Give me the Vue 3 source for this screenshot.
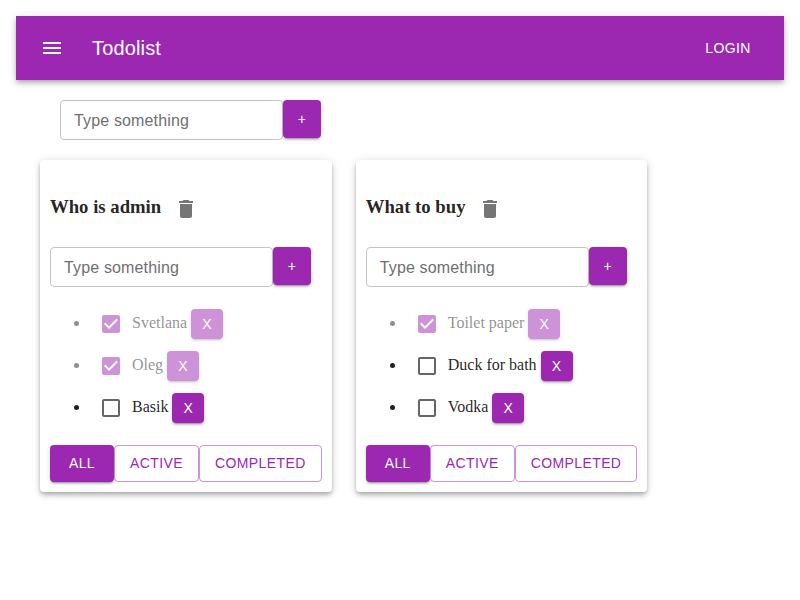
<script setup>
import { reactive } from 'vue'

const lists = reactive([
  {
    title: 'Who is admin',
    tasks: [
      { name: 'Svetlana', done: true },
      { name: 'Oleg', done: true },
      { name: 'Basik', done: false },
    ],
  },
  {
    title: 'What to buy',
    tasks: [
      { name: 'Toilet paper', done: true },
      { name: 'Duck for bath', done: false },
      { name: 'Vodka', done: false },
    ],
  },
])
</script>

<template>
  <div class="page">
    <header class="bar">
      <button class="menu" aria-label="menu">
        <svg viewBox="0 0 24 24"><path d="M3 18h18v-2H3v2zm0-5h18v-2H3v2zm0-7v2h18V6H3z" /></svg>
      </button>
      <div class="brand">Todolist</div>
      <button class="login">Login</button>
    </header>
    <main class="container">
      <div class="add-form top-form">
        <input class="field" placeholder="Type something" />
        <button class="btn add">+</button>
      </div>
      <div class="grid">
        <section v-for="list in lists" :key="list.title" class="card">
          <h3 class="title">
            <span>{{ list.title }}</span>
            <button class="trash" aria-label="delete">
              <svg viewBox="0 0 24 24"><path d="M6 19c0 1.1.9 2 2 2h8c1.1 0 2-.9 2-2V7H6v12zM19 4h-3.500l-1-1h-5l-1 1H5v2h14V4z" /></svg>
            </button>
          </h3>
          <div class="add-form">
            <input class="field" placeholder="Type something" />
            <button class="btn add">+</button>
          </div>
          <ul class="tasks">
            <li v-for="task in list.tasks" :key="task.name" :class="{ done: task.done }">
              <div class="row">
                <span class="check" @click="task.done = !task.done">
                  <svg viewBox="0 0 24 24">
                    <path v-if="task.done" d="M19 3H5c-1.110 0-2 .9-2 2v14c0 1.100.89 2 2 2h14c1.110 0 2-.9 2-2V5c0-1.100-.89-2-2-2zm-9 14l-5-5 1.410-1.410L10 14.170l7.590-7.590L19 8l-9 9z" />
                    <path v-else d="M19 5v14H5V5h14m0-2H5c-1.100 0-2 .9-2 2v14c0 1.100.9 2 2 2h14c1.100 0 2-.9 2-2V5c0-1.100-.9-2-2-2z" />
                  </svg>
                </span>
                <span class="name">{{ task.name }}</span>
                <button class="btn remove">X</button>
              </div>
            </li>
          </ul>
          <div class="filters">
            <button class="btn filter">All</button>
            <button class="btn filter outlined">Active</button>
            <button class="btn filter outlined">Completed</button>
          </div>
        </section>
      </div>
    </main>
  </div>
</template>

<style>
body {
  background: #fff;
}
</style>

<style scoped>
.page {
  padding: 16px;
  font-family: "Liberation Serif", serif;
  font-size: 16px;
}
* {
  box-sizing: border-box;
}
button {
  border: 0;
  background: none;
  padding: 0;
  margin: 0;
  cursor: pointer;
  font-family: "Liberation Sans", sans-serif;
}
svg {
  display: block;
  width: 24px;
  height: 24px;
  fill: currentColor;
}
.bar {
  display: flex;
  align-items: center;
  height: 64px;
  padding: 0 24px;
  background: #9c27b0;
  color: #fff;
  box-shadow: 0 2px 4px -1px rgba(0, 0, 0, 0.2), 0 4px 5px 0 rgba(0, 0, 0, 0.14), 0 1px 10px 0 rgba(0, 0, 0, 0.12);
}
.menu {
  padding: 12px;
  margin: 0 16px 0 -12px;
  color: inherit;
}
.brand {
  flex: 1;
  font: 500 20px/32px "Liberation Sans", sans-serif;
  letter-spacing: 0.15px;
}
.login {
  padding: 6px 8px;
  min-width: 64px;
  color: inherit;
  font-size: 14px;
  line-height: 24.5px;
  letter-spacing: 0.4px;
  text-transform: uppercase;
}
.container {
  padding: 0 24px;
}
.add-form {
  display: flex;
  align-items: flex-start;
}
.top-form {
  padding: 20px;
}
.field {
  width: 223px;
  height: 40px;
  padding: 9px 13px 7px;
  border: 1px solid #c4c4c4;
  border-radius: 4px;
  background: none;
  outline: none;
  font: 16px/23px "Liberation Sans", sans-serif;
  letter-spacing: 0.15px;
  color: rgba(0, 0, 0, 0.87);
}
.field::placeholder {
  color: #6f6f6f;
  opacity: 1;
}
.btn {
  border-radius: 4px;
  background: #9c27b0;
  color: #fff;
  font-size: 14px;
  line-height: 24.5px;
  letter-spacing: 0.4px;
  text-transform: uppercase;
  box-shadow: 0 3px 1px -2px rgba(0, 0, 0, 0.2), 0 2px 2px 0 rgba(0, 0, 0, 0.14), 0 1px 5px 0 rgba(0, 0, 0, 0.12);
}
.add {
  width: 38px;
  height: 38px;
}
.grid {
  display: flex;
  align-items: flex-start;
  gap: 24.15px;
}
.card {
  width: 291.6px;
  padding: 10px;
  border-radius: 4px;
  background: #fff;
  color: rgba(0, 0, 0, 0.87);
  box-shadow: 0 2px 4px -1px rgba(0, 0, 0, 0.2), 0 4px 5px 0 rgba(0, 0, 0, 0.14), 0 1px 10px 0 rgba(0, 0, 0, 0.12);
}
.title {
  display: flex;
  align-items: center;
  gap: 4.7px;
  margin: 18.700px 0;
  font-size: 18.720px;
  line-height: 22px;
}
.title span {
  padding-bottom: 3px;
}
.trash {
  padding: 8px;
  color: rgba(0, 0, 0, 0.54);
}
.tasks {
  margin: 16px 0;
  padding-left: 40px;
}
.row {
  display: inline-flex;
  align-items: center;
  height: 42px;
  vertical-align: middle;
}
.done {
  opacity: 0.5;
}
.check {
  padding: 9px;
  color: rgba(0, 0, 0, 0.6);
}
.done .check {
  color: #9c27b0;
}
.name {
  padding-bottom: 2px;
  margin-right: 4px;
}
.remove {
  width: 32px;
  height: 30px;
}
.filters {
  display: flex;
}
.filter {
  min-width: 64px;
  height: 36.5px;
  padding: 6px 16px;
}
.outlined {
  padding: 5px 15px;
  border: 1px solid rgba(156, 39, 176, 0.5);
  background: none;
  color: #9c27b0;
  box-shadow: none;
}
</style>
